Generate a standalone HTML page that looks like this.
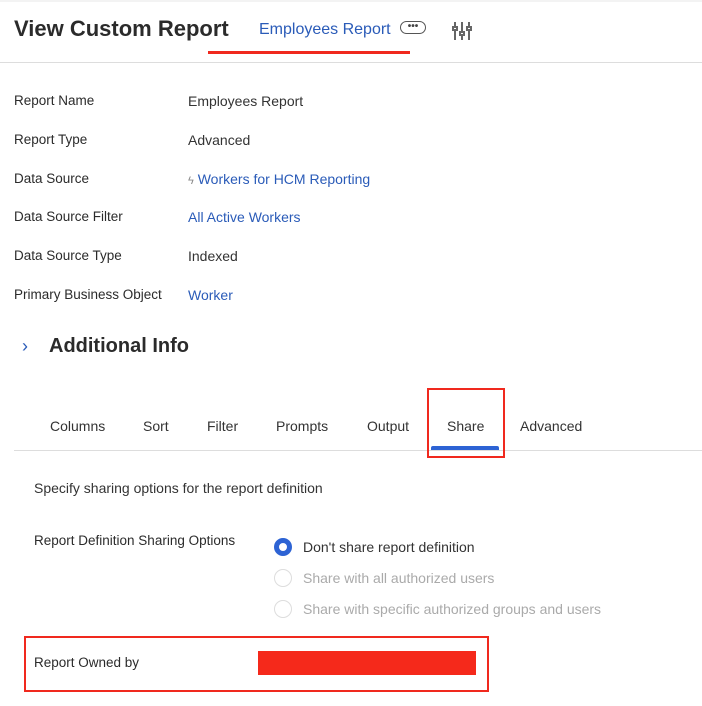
<!DOCTYPE html><html><head><style>
body{margin:0;width:702px;height:706px;background:#fff;font-family:"Liberation Sans",sans-serif;position:relative;overflow:hidden;color:#333}
.a{position:absolute;white-space:nowrap}
.l{font-size:13.5px;color:#2b2b2b;font-weight:500}
.v{font-size:14px;color:#333}
.b{color:#2a5bb8}
.t{font-size:14px;color:#333;top:418px}
</style></head><body>
<div class="a" style="left:0;top:0;width:702px;height:2px;background:#f3f3f3"></div>
<div class="a" style="left:14px;top:16px;font-size:22px;font-weight:bold;color:#2b2b2b">View Custom Report</div>
<div class="a b" style="left:259px;top:21px;font-size:16px">Employees Report</div>
<div class="a" style="left:400px;top:21px;width:24px;height:11px;border:1.5px solid #555;border-radius:7px;font-size:10px;line-height:9px;text-align:center;color:#444;font-weight:bold">•••</div>
<svg class="a" style="left:452px;top:21px" width="20" height="20" viewBox="0 0 20 20" stroke="#666" stroke-width="2" fill="none"><path d="M3 1v18M10 1v18M17 1v18"/><rect x="1" y="6" width="4" height="3" fill="#fff"/><rect x="8" y="11" width="4" height="3" fill="#fff"/><rect x="15" y="6" width="4" height="3" fill="#fff"/></svg>
<div class="a" style="left:208px;top:51px;width:202px;height:3px;background:#f0291e"></div>
<div class="a" style="left:0;top:62px;width:702px;height:1px;background:#ddd"></div>

<div class="a l" style="left:14px;top:93px">Report Name</div><div class="a v" style="left:188px;top:93px">Employees Report</div>
<div class="a l" style="left:14px;top:132px">Report Type</div><div class="a v" style="left:188px;top:132px">Advanced</div>
<div class="a l" style="left:14px;top:171px">Data Source</div><div class="a v" style="left:188px;top:171px"><span style="color:#888;font-size:11px">ϟ</span> <span class="b">Workers for HCM Reporting</span></div>
<div class="a l" style="left:14px;top:209px">Data Source Filter</div><div class="a v b" style="left:188px;top:209px">All Active Workers</div>
<div class="a l" style="left:14px;top:248px">Data Source Type</div><div class="a v" style="left:188px;top:248px">Indexed</div>
<div class="a l" style="left:14px;top:287px">Primary Business Object</div><div class="a v b" style="left:188px;top:287px">Worker</div>

<div class="a b" style="left:22px;top:336px;font-size:18px">›</div>
<div class="a" style="left:49px;top:335px;font-size:20px;font-weight:bold;color:#2b2b2b">Additional Info</div>

<div class="a t" style="left:50px">Columns</div>
<div class="a t" style="left:143px">Sort</div>
<div class="a t" style="left:207px">Filter</div>
<div class="a t" style="left:276px">Prompts</div>
<div class="a t" style="left:367px">Output</div>
<div class="a t b" style="left:447px">Share</div>
<div class="a t" style="left:520px">Advanced</div>
<div class="a" style="left:431px;top:446px;width:68px;height:4px;background:#2d63d4;border-radius:2px 2px 0 0"></div>
<div class="a" style="left:14px;top:450px;width:688px;height:1px;background:#ddd"></div>
<div class="a" style="left:427px;top:388px;width:74px;height:66px;border:2px solid #f0291e"></div>

<div class="a v" style="left:34px;top:480px">Specify sharing options for the report definition</div>
<div class="a l" style="left:34px;top:533px">Report Definition Sharing Options</div>
<div class="a" style="left:274px;top:538px;width:8px;height:8px;border:5px solid #2d63d4;border-radius:50%"></div>
<div class="a v" style="left:303px;top:539px">Don't share report definition</div>
<div class="a" style="left:274px;top:569px;width:16px;height:16px;border:1px solid #ddd;border-radius:50%"></div>
<div class="a v" style="left:303px;top:570px;color:#aaa">Share with all authorized users</div>
<div class="a" style="left:274px;top:600px;width:16px;height:16px;border:1px solid #ddd;border-radius:50%"></div>
<div class="a v" style="left:303px;top:601px;color:#aaa">Share with specific authorized groups and users</div>

<div class="a" style="left:24px;top:636px;width:461px;height:52px;border:2px solid #f0291e"></div>
<div class="a l" style="left:34px;top:655px">Report Owned by</div>
<div class="a" style="left:258px;top:651px;width:218px;height:24px;background:#f5291b"></div>
</body></html>
